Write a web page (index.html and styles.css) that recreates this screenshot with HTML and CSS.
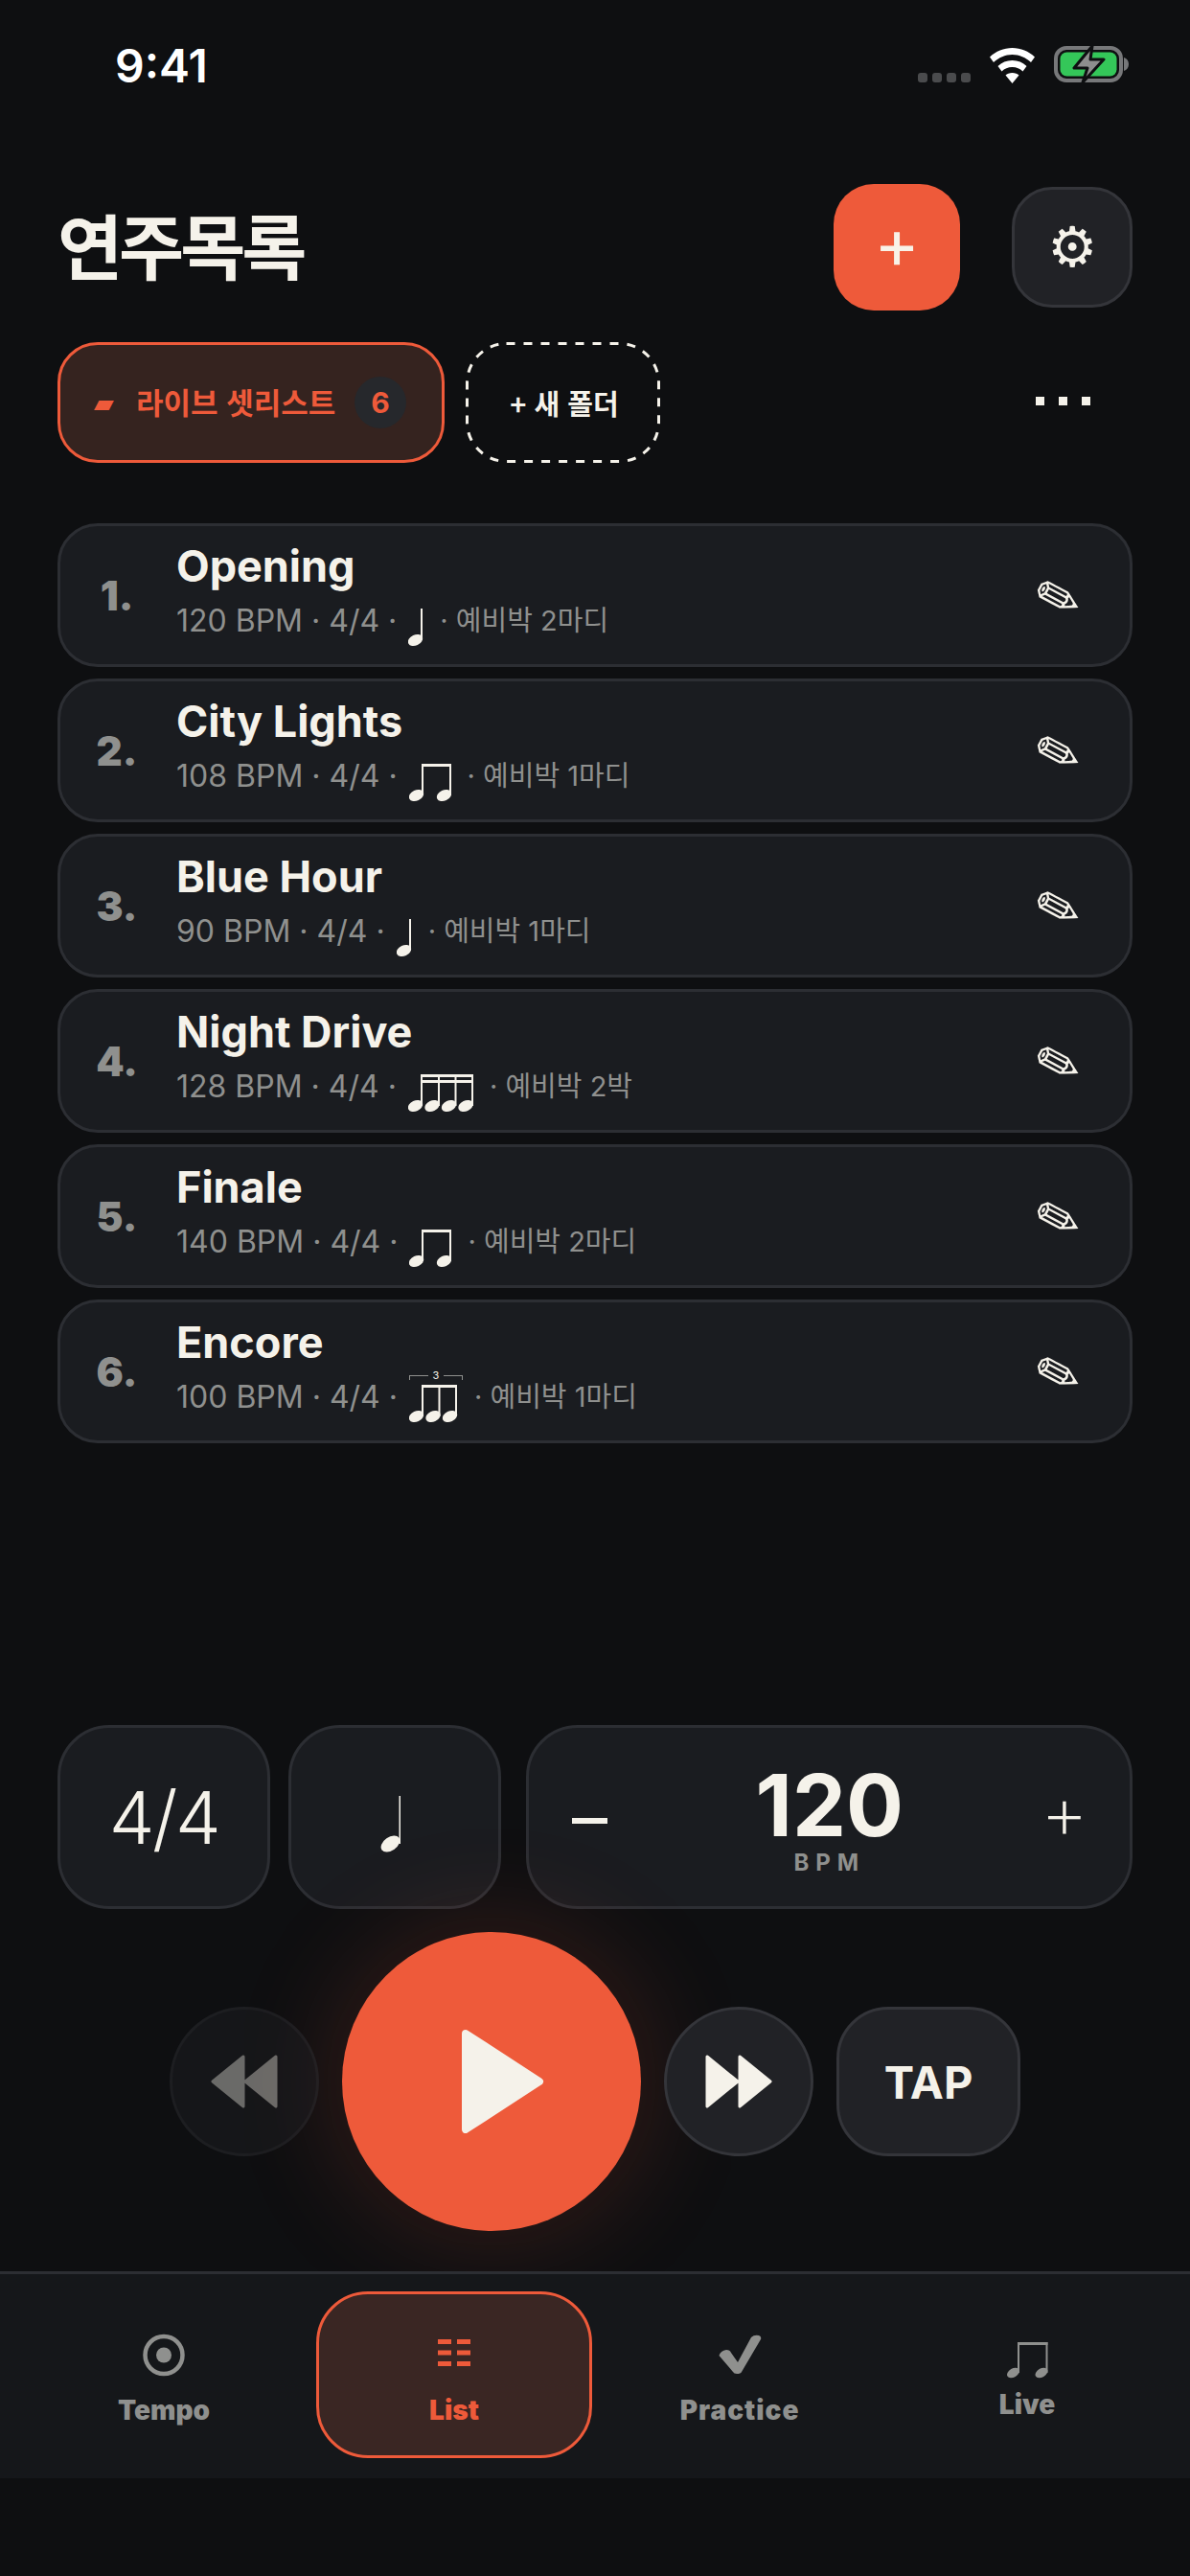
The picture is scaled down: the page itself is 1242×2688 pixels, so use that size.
FILE: index.html
```html
<!DOCTYPE html>
<html lang="ko">
<head>
<meta charset="utf-8">
<title>연주목록</title>
<link rel="stylesheet" href="styles.css">
</head>
<body>
<div class="app">
  <div class="status">
    <span class="time">9:41</span>
    <div class="status-icons">
      <div class="signal"><i></i><i></i><i></i><i></i></div>
      <svg class="wifi" width="47" height="37" viewBox="0 0 47 37"><path fill="#fff" d="M23.5 0C14.5 0 6.5 3.500 0 9.500L4 15C9.500 10 16 7 23.500 7S37.500 10 43 15L47 9.500C40.500 3.500 32.500 0 23.500 0Z"/><path fill="#fff" d="M23.500 13C17.500 13 12.500 15 8.500 19L12.500 24.500C15.500 21.500 19 20 23.500 20S31.500 21.500 34.500 24.500L38.500 19C34.500 15 29.500 13 23.500 13Z"/><path fill="#fff" d="M23.500 26C20.500 26 18 27 16.500 28.500L23.500 37L30.500 28.500C29 27 26.500 26 23.500 26Z"/></svg>
      <svg class="battery" width="80" height="40" viewBox="0 0 80 40"><rect x="2" y="3" width="68" height="34" rx="11" fill="none" stroke="#77787a" stroke-width="4"/><rect x="6.500" y="7.500" width="59" height="25" rx="7" fill="#34c759"/><path d="M73 13c3 1 5 3.500 5 7s-2 6-5 7z" fill="#77787a"/><path d="M40 1L21 24H35L30 39L52 15H38Z" fill="#8e8e8e" stroke="#0e0f11" stroke-width="3" stroke-linejoin="round"/></svg>
    </div>
  </div>

  <header class="header">
    <h1 class="title">연주목록</h1>
    <div class="header-actions">
      <button class="add">+</button>
      <button class="settings">⚙</button>
    </div>
  </header>

  <div class="chips">
    <div class="chip chip-active"><span class="chip-mark">▰</span><span class="chip-label">라이브 셋리스트</span><span class="badge">6</span></div>
    <div class="chip chip-new">
      <svg class="dash" width="203" height="126" viewBox="0 0 203 126"><rect x="1.500" y="1.500" width="200" height="123" rx="41" fill="none" stroke="#f5f2ea" stroke-width="3" stroke-dasharray="9 9"/></svg>
      + 새 폴더
    </div>
    <div class="more"><i></i><i></i><i></i></div>
  </div>

  <div class="list">
    <div class="row">
      <span class="num">1.</span>
      <div class="info">
        <div class="song">Opening</div>
        <div class="meta"><span>120 BPM · 4/4 ·</span>
          <svg class="note" width="16" height="40" viewBox="0 0 16 40"><rect x="13" y="0" width="2" height="33"/><ellipse cx="7.500" cy="33" rx="8" ry="5.500" transform="rotate(-25 7.500 33)"/></svg>
          <span class="pre">· 예비박 2마디</span></div>
      </div>
      <span class="edit">✏</span>
    </div>
    <div class="row">
      <span class="num">2.</span>
      <div class="info">
        <div class="song">City Lights</div>
        <div class="meta"><span>108 BPM · 4/4 ·</span>
          <svg class="note" width="44" height="40" viewBox="0 0 44 40"><rect x="13" y="0" width="31" height="3"/><rect x="13" y="0" width="2" height="33"/><rect x="42" y="0" width="2" height="33"/><ellipse cx="7.500" cy="33" rx="8" ry="5.500" transform="rotate(-25 7.500 33)"/><ellipse cx="36.500" cy="33" rx="8" ry="5.500" transform="rotate(-25 36.500 33)"/></svg>
          <span class="pre">· 예비박 1마디</span></div>
      </div>
      <span class="edit">✏</span>
    </div>
    <div class="row">
      <span class="num">3.</span>
      <div class="info">
        <div class="song">Blue Hour</div>
        <div class="meta"><span>90 BPM · 4/4 ·</span>
          <svg class="note" width="16" height="40" viewBox="0 0 16 40"><rect x="13" y="0" width="2" height="33"/><ellipse cx="7.500" cy="33" rx="8" ry="5.500" transform="rotate(-25 7.500 33)"/></svg>
          <span class="pre">· 예비박 1마디</span></div>
      </div>
      <span class="edit">✏</span>
    </div>
    <div class="row">
      <span class="num">4.</span>
      <div class="info">
        <div class="song">Night Drive</div>
        <div class="meta"><span>128 BPM · 4/4 ·</span>
          <svg class="note" width="68" height="40" viewBox="0 0 68 40"><rect x="13" y="0" width="55" height="3"/><rect x="13" y="6" width="55" height="3"/><rect x="13" y="0" width="2" height="33"/><rect x="31" y="0" width="2" height="33"/><rect x="48.500" y="0" width="2" height="33"/><rect x="66" y="0" width="2" height="33"/><ellipse cx="7.500" cy="33" rx="8" ry="5.500" transform="rotate(-25 7.500 33)"/><ellipse cx="25" cy="33" rx="8" ry="5.500" transform="rotate(-25 25 33)"/><ellipse cx="42.500" cy="33" rx="8" ry="5.500" transform="rotate(-25 42.500 33)"/><ellipse cx="60" cy="33" rx="8" ry="5.500" transform="rotate(-25 60 33)"/></svg>
          <span class="pre">· 예비박 2박</span></div>
      </div>
      <span class="edit">✏</span>
    </div>
    <div class="row">
      <span class="num">5.</span>
      <div class="info">
        <div class="song">Finale</div>
        <div class="meta"><span>140 BPM · 4/4 ·</span>
          <svg class="note" width="44" height="40" viewBox="0 0 44 40"><rect x="13" y="0" width="31" height="3"/><rect x="13" y="0" width="2" height="33"/><rect x="42" y="0" width="2" height="33"/><ellipse cx="7.500" cy="33" rx="8" ry="5.500" transform="rotate(-25 7.500 33)"/><ellipse cx="36.500" cy="33" rx="8" ry="5.500" transform="rotate(-25 36.500 33)"/></svg>
          <span class="pre">· 예비박 2마디</span></div>
      </div>
      <span class="edit">✏</span>
    </div>
    <div class="row">
      <span class="num">6.</span>
      <div class="info">
        <div class="song">Encore</div>
        <div class="meta"><span>100 BPM · 4/4 ·</span>
          <span class="triplet">
            <span class="tri-label">3</span>
            <svg class="note" width="51" height="40" viewBox="0 0 51 40"><rect x="13" y="0" width="36" height="3"/><rect x="13" y="0" width="2" height="33"/><rect x="30.500" y="0" width="2" height="33"/><rect x="48" y="0" width="2" height="33"/><ellipse cx="7.500" cy="33" rx="8" ry="5.500" transform="rotate(-25 7.500 33)"/><ellipse cx="25" cy="33" rx="8" ry="5.500" transform="rotate(-25 25 33)"/><ellipse cx="42.500" cy="33" rx="8" ry="5.500" transform="rotate(-25 42.500 33)"/></svg>
          </span>
          <span class="pre">· 예비박 1마디</span></div>
      </div>
      <span class="edit">✏</span>
    </div>
  </div>

  <div class="cards">
    <div class="card card-sig">4/4</div>
    <div class="card card-note">
      <svg class="big-note" width="24" height="60" viewBox="0 0 24 60"><rect x="20.500" y="0" width="1.500" height="50" fill="#f5f2ea"/><ellipse cx="11.500" cy="50" rx="11" ry="7" transform="rotate(-35 11.500 50)" fill="#f5f2ea"/></svg>
    </div>
    <div class="card card-bpm">
      <span class="bpm-minus">–</span>
      <div class="bpm-center"><span class="bpm-value">120</span><span class="bpm-label">BPM</span></div>
      <span class="bpm-plus">+</span>
    </div>
  </div>

  <div class="controls">
    <div class="round round-dim">
      <svg width="72" height="56" viewBox="0 0 72 56"><path d="M35 2L3 28L35 54Z M69 2L37 28L69 54Z" fill="#f5f2ea" stroke="#f5f2ea" stroke-width="3" stroke-linejoin="round"/></svg>
    </div>
    <div class="play">
      <svg width="86" height="108" viewBox="0 0 86 108"><path d="M4 4L81 54L4 104Z" fill="#f5f2ea" stroke="#f5f2ea" stroke-width="8" stroke-linejoin="round"/></svg>
    </div>
    <div class="round">
      <svg width="72" height="56" viewBox="0 0 72 56"><path d="M3 2L35 28L3 54Z M37 2L69 28L37 54Z" fill="#f5f2ea" stroke="#f5f2ea" stroke-width="3" stroke-linejoin="round"/></svg>
    </div>
    <div class="tap">TAP</div>
  </div>

  <nav class="tabbar">
    <div class="tab">
      <svg class="tab-icon" width="60" height="60" viewBox="0 0 60 60"><circle cx="30" cy="30.500" r="19.500" fill="none" stroke="currentColor" stroke-width="4.500"/><circle cx="30" cy="30.500" r="8" fill="currentColor"/></svg>
      <span class="tab-label">Tempo</span>
    </div>
    <div class="tab tab-active">
      <svg class="tab-icon" width="34" height="60" viewBox="0 0 34 60" fill="currentColor"><rect x="0" y="14" width="14" height="5"/><rect x="20" y="14" width="14" height="5"/><rect x="0" y="25.500" width="14" height="5"/><rect x="20" y="25.500" width="14" height="5"/><rect x="0" y="37" width="14" height="5"/><rect x="20" y="37" width="14" height="5"/></svg>
      <span class="tab-label">List</span>
    </div>
    <div class="tab tab-practice">
      <svg class="tab-icon" width="45" height="60" viewBox="0 0 45 60" fill="currentColor"><path d="M0.500 31Q2 26 8 25Q12 25 13 28L20 38L34 12Q37 9 42 10Q45 11 44 14L24 48Q23 50 19 50Q16 50 15 48Z"/></svg>
      <span class="tab-label">Practice</span>
    </div>
    <div class="tab tab-live">
      <svg class="tab-icon" width="43" height="60" viewBox="0 0 43 60" fill="currentColor"><rect x="11" y="17" width="31.500" height="3"/><rect x="11" y="17" width="2" height="32"/><rect x="40.500" y="17" width="2" height="32"/><ellipse cx="6.500" cy="49" rx="7" ry="4.500" transform="rotate(-30 6.500 49)"/><ellipse cx="36" cy="49" rx="7" ry="4.500" transform="rotate(-30 36 49)"/></svg>
      <span class="tab-label">Live</span>
    </div>
  </nav>
</div>
</body>
</html>
```
FILE: styles.css
```css
* { box-sizing: border-box; margin: 0; padding: 0; }
html, body { background: #0e0f11; }
body { width: 1242px; height: 2688px; overflow: hidden; font-family: Inter, "Noto Sans CJK KR", sans-serif; color: #f5f2ea; }
.app { width: 1242px; height: 2688px; display: flex; flex-direction: column; background: #0e0f11; }
i { display: block; }
button { border: 0; font: inherit; color: inherit; }

.status { height: 192px; flex: none; display: flex; justify-content: space-between; align-items: flex-start; padding: 40px 62px 0 120px; }
.time { font-size: 48px; font-weight: 600; line-height: 58px; color: #fff; }
.status-icons { display: flex; align-items: flex-end; gap: 20px; padding-top: 9px; height: 47px; }
.signal { display: flex; gap: 5px; padding-bottom: 1px; }
.signal i { width: 10px; height: 10px; border-radius: 3px; background: #4a4b4d; }
.wifi { display: block; }
.battery { display: block; }

.header { display: flex; justify-content: space-between; align-items: center; padding: 0 60px; height: 132px; flex: none; }
.title { font-family: "Noto Sans CJK KR", sans-serif; font-size: 74px; font-weight: 700; letter-spacing: -4px; line-height: 1; color: #f5f2ea; margin-top: -9px; }
.header-actions { display: flex; align-items: center; gap: 54px; }
.add { width: 132px; height: 132px; border-radius: 42px; background: #ee5a3a; font-size: 72px; font-weight: 400; line-height: 1; color: #f8f2e8; display: flex; align-items: center; justify-content: center; padding-bottom: 9px; }
.settings { width: 126px; height: 126px; border-radius: 42px; background: #212226; border: 3px solid #34353a; font-family: "DejaVu Sans", sans-serif; font-size: 58px; line-height: 1; display: flex; align-items: center; justify-content: center; color: #f5f2ea; }

.chips { display: flex; align-items: center; margin-top: 33px; padding: 0 60px; gap: 22px; flex: none; }
.chip { height: 126px; border-radius: 42px; display: flex; align-items: center; }
.chip-active { width: 404px; background: #35231f; border: 3px solid #ee5a3a; padding-left: 35px; color: #ee5a3a; font-weight: 700; font-size: 31px; font-family: "Noto Sans CJK KR", sans-serif; }
.chip-mark { font-family: "DejaVu Sans", sans-serif; font-size: 27px; width: 44px; }
.chip-label { width: 228px; white-space: nowrap; margin-top: -3px; }
.badge { width: 54px; height: 54px; border-radius: 50%; background: #26282c; display: flex; align-items: center; justify-content: center; font-family: Inter, sans-serif; font-size: 30px; font-weight: 700; }
.chip-new { width: 203px; justify-content: center; position: relative; padding-left: 3px; font-family: "Noto Sans CJK KR", sans-serif; font-size: 29px; font-weight: 700; }
.dash { position: absolute; left: 0; top: 0; }
.more { display: flex; gap: 15px; margin-left: auto; margin-right: 44px; margin-top: -4px; }
.more i { width: 9px; height: 9px; background: #f5f2ea; }

.list { display: flex; flex-direction: column; gap: 12px; margin-top: 63px; padding: 0 60px; flex: none; }
.row { height: 150px; border-radius: 42px; background: #1a1c20; border: 3px solid #2c2e33; display: flex; align-items: center; padding-left: 21px; position: relative; }
.num { width: 76px; text-align: center; font-size: 42px; font-weight: 900; color: #8f908e; }
.info { margin-left: 24px; flex: 1; display: flex; flex-direction: column; }
.song { font-size: 45px; font-weight: 700; line-height: 56px; color: #f5f2ea; }
.meta { display: flex; align-items: flex-start; height: 51px; margin-top: 9px; font-size: 32px; line-height: 40px; color: #8f908e; font-weight: 400; white-space: nowrap; }
.note { display: block; margin-left: 12px; margin-top: 7px; fill: #f5f2ea; flex: none; }
.pre { margin-left: 17px; font-size: 29px; }
.triplet { position: relative; display: block; }
.tri-label { position: absolute; left: 12px; top: -10px; width: 56px; height: 14px; display: flex; align-items: center; font-size: 11px; line-height: 14px; color: #f5f2ea; gap: 5px; }
.tri-label::before, .tri-label::after { content: ""; flex: 1; height: 4px; margin-top: 4px; border-top: 1px solid #8f908e; }
.tri-label::before { border-left: 1px solid #8f908e; }
.tri-label::after { border-right: 1px solid #8f908e; }
.edit { position: absolute; right: 50px; top: 50%; margin-top: 3px; transform: translateY(-50%) rotate(28deg); font-family: "DejaVu Sans", sans-serif; font-size: 58px; line-height: 1; color: #f5f2ea; }

.cards { margin-top: auto; display: flex; padding: 0 60px; flex: none; }
.card { height: 192px; border-radius: 54px; background: #1a1c20; border: 3px solid #2c2e33; display: flex; align-items: center; justify-content: center; }
.card-sig { width: 222px; font-size: 76px; font-weight: 300; letter-spacing: -2.500px; }
.card-note { width: 222px; margin-left: 19px; }
.big-note { margin-top: 16px; margin-right: 8px; }
.card-bpm { flex: 1; margin-left: 26px; justify-content: space-between; padding: 0 43px 0 45px; }
.bpm-minus { font-size: 74px; font-weight: 400; line-height: 1; }
.bpm-plus { font-size: 78px; font-weight: 200; line-height: 1; margin-top: -10px; }
.bpm-center { display: flex; flex-direction: column; align-items: center; margin-top: 4px; margin-left: 12px; }
.bpm-value { font-size: 89px; font-weight: 700; line-height: 90px; }
.bpm-label { font-size: 24px; font-weight: 700; letter-spacing: 7px; color: #8f908e; line-height: 26px; margin-top: 2px; }

.controls { display: flex; align-items: center; justify-content: center; gap: 24px; margin-top: 24px; flex: none; }
.round { width: 156px; height: 156px; border-radius: 50%; background: #212226; border: 3px solid #34353a; display: flex; align-items: center; justify-content: center; }
.round-dim { opacity: 0.4; }
.play { width: 312px; height: 312px; border-radius: 50%; background: #ee5a3a; box-shadow: 0 0 120px rgba(238, 90, 58, 0.2); display: flex; align-items: center; justify-content: center; padding-left: 24px; }
.tap { width: 192px; height: 156px; border-radius: 54px; background: #212226; border: 3px solid #34353a; display: flex; align-items: center; justify-content: center; font-size: 47px; font-weight: 700; }

.tabbar { margin-top: 42px; height: 216px; flex: none; background: #15171a; border-top: 3px solid #2c2e33; display: grid; grid-template-columns: 294px 288px 284px 292px; gap: 12px; padding: 18px 0 21px 24px; margin-bottom: 102px; }
.tab { height: 174px; border-radius: 54px; display: flex; flex-direction: column; align-items: center; border: 3px solid transparent; color: #8f908e; }
.tab-active { background: #3a2623; border-color: #ee5a3a; color: #ee5a3a; }
.tab-icon { display: block; margin-top: 33px; flex: none; }
.tab-label { font-size: 28px; font-weight: 900; line-height: 34px; margin-top: 11px; }
.tab-live .tab-label { margin-top: 5px; }
.tab-practice .tab-label { letter-spacing: 1px; }
```
